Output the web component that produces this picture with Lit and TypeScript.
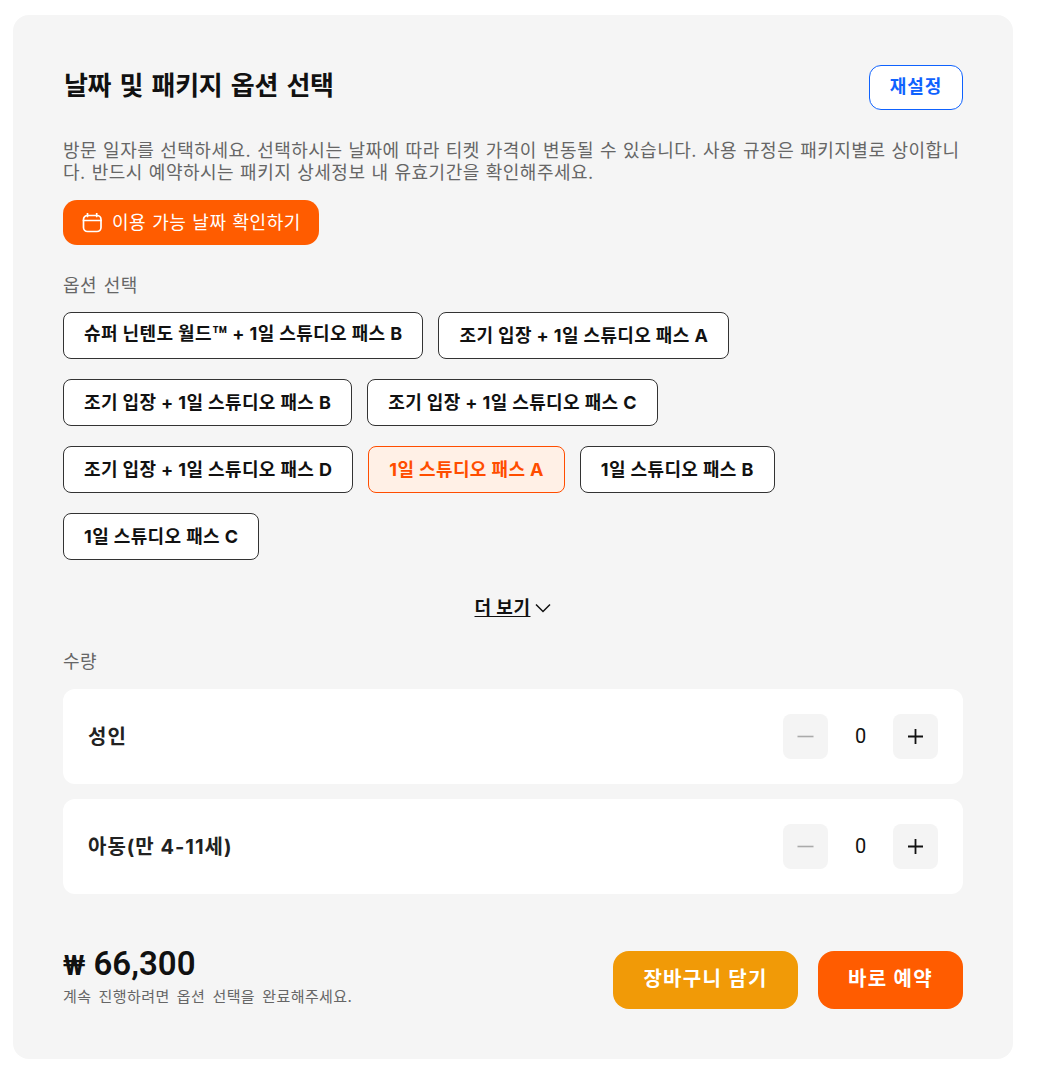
import { LitElement, css, html } from "lit";
import { customElement, property } from "lit/decorators.js";

const OPTIONS = [
  "슈퍼 닌텐도 월드™ + 1일 스튜디오 패스 B",
  "조기 입장 + 1일 스튜디오 패스 A",
  "조기 입장 + 1일 스튜디오 패스 B",
  "조기 입장 + 1일 스튜디오 패스 C",
  "조기 입장 + 1일 스튜디오 패스 D",
  "1일 스튜디오 패스 A",
  "1일 스튜디오 패스 B",
  "1일 스튜디오 패스 C",
];

@customElement("qty-row")
class QtyRow extends LitElement {
  static styles = css`
    :host {
      display: flex;
      align-items: center;
      justify-content: space-between;
      height: 95px;
      padding: 0 25px;
      box-sizing: border-box;
      background: #fff;
      border-radius: 12px;
    }
    .name {
      font-size: 20px;
      font-weight: 700;
      color: #222;
      letter-spacing: 1px;
      margin-top: -2px;
    }
    .stepper {
      display: flex;
      align-items: center;
    }
    .step {
      display: flex;
      align-items: center;
      justify-content: center;
      width: 45px;
      height: 45px;
      background: #f4f4f4;
      border-radius: 8px;
    }
    .count {
      width: 65px;
      text-align: center;
      font-family: "Roboto", sans-serif;
      font-size: 20px;
      font-weight: 400;
      color: #111;
      margin-top: -1px;
    }
  `;

  @property({ type: String })
  label = "";

  render() {
    return html`
      <div class="name">${this.label}</div>
      <div class="stepper">
        <div class="step">
          <svg width="17" height="17" viewBox="0 0 17 17"><path d="M0.5 8.5h16" stroke="#aaa" stroke-width="1.6" /></svg>
        </div>
        <div class="count">0</div>
        <div class="step">
          <svg width="17" height="17" viewBox="0 0 17 17"><path d="M1 8.5h15M8.5 1v15" stroke="#111" stroke-width="1.8" /></svg>
        </div>
      </div>
    `;
  }
}

@customElement("app-root")
class AppRoot extends LitElement {
  static styles = css`
    :host {
      display: block;
      font-family: "Inter", "Noto Sans CJK KR", sans-serif;
      background: #fff;
    }
    .card {
      width: 1000px;
      height: 1044px;
      margin: 15px 0 12px 13px;
      padding: 50px;
      box-sizing: border-box;
      background: #f5f5f5;
      border-radius: 16px;
    }
    .head {
      display: flex;
      justify-content: space-between;
      align-items: flex-start;
    }
    h2 {
      margin: 0 0 0 1px;
      font-size: 26px;
      line-height: 42px;
      font-weight: 700;
      color: #111;
      letter-spacing: -0.3px;
      word-spacing: 2.5px;
    }
    .reset {
      width: 94px;
      height: 45px;
      padding: 0 0 6px;
      box-sizing: border-box;
      font: inherit;
      font-size: 18px;
      font-weight: 700;
      letter-spacing: 1px;
      color: #0f62fe;
      background: #fff;
      border: 1px solid #0f62fe;
      border-radius: 12px;
    }
    .desc {
      margin: 30px 0 0;
      font-size: 18px;
      line-height: 22px;
      letter-spacing: 0.5px;
      word-spacing: 0.4px;
      color: #666;
      word-break: break-all;
    }
    .dates {
      display: inline-flex;
      align-items: center;
      gap: 10px;
      height: 45px;
      margin-top: 16px;
      padding: 0 18px 0 19px;
      box-sizing: border-box;
      font: inherit;
      font-size: 18px;
      letter-spacing: 0.5px;
      word-spacing: 0.5px;
      color: #fff;
      background: #ff5c00;
      border: 0;
      border-radius: 14px;
    }
    .dates span {
      margin-top: -3px;
    }
    .label {
      font-size: 18px;
      line-height: 26px;
      letter-spacing: 0.5px;
      word-spacing: 1px;
      color: #666;
    }
    .opts-label {
      margin-top: 28px;
    }
    .chips {
      display: flex;
      flex-wrap: wrap;
      gap: 20px 15px;
      margin-top: 13px;
      padding-right: 10px;
    }
    .chip {
      height: 47px;
      padding: 0 20px 4px;
      box-sizing: border-box;
      display: flex;
      align-items: center;
      font-size: 18px;
      font-weight: 700;
      letter-spacing: 0.38px;
      color: #111;
      background: #fff;
      border: 1px solid #333;
      border-radius: 8px;
      white-space: nowrap;
    }
    .chip.on {
      color: #ff4d00;
      background: #fff0e6;
      border-color: #ff4d00;
    }
    .tm {
      font-size: 24px;
      line-height: 1;
      vertical-align: -4px;
    }
    .more {
      display: flex;
      justify-content: center;
      align-items: center;
      gap: 5px;
      margin-top: 35px;
      font-size: 18px;
      line-height: 26px;
      font-weight: 700;
      letter-spacing: 0.5px;
      color: #111;
    }
    .more u {
      text-underline-offset: 2px;
    }
    .qty-label {
      margin-top: 28px;
    }
    .rows {
      display: flex;
      flex-direction: column;
      gap: 15px;
      margin-top: 14px;
    }
    .foot {
      display: flex;
      justify-content: space-between;
      align-items: flex-start;
      margin-top: 57px;
    }
    .price {
      font-family: "Roboto", "Noto Sans CJK KR", sans-serif;
      font-size: 33px;
      line-height: 38px;
      font-weight: 600;
      color: #111;
      margin-top: -6px;
    }
    .won {
      font-size: 28px;
    }
    .hint {
      margin-top: 2px;
      font-size: 15px;
      line-height: 20px;
      letter-spacing: 0.4px;
      word-spacing: 2.6px;
      color: #666;
    }
    .actions {
      display: flex;
      gap: 20px;
    }
    .buy {
      height: 58px;
      padding: 0 0 6px;
      box-sizing: border-box;
      font: inherit;
      font-size: 20px;
      font-weight: 700;
      letter-spacing: 1.3px;
      color: #fff;
      border: 0;
      border-radius: 16px;
    }
    .cart {
      width: 185px;
      background: #f19a07;
    }
    .now {
      width: 145px;
      background: #ff5c00;
    }
  `;

  private renderOption(o: string) {
    const [before, after] = o.split("™");
    return after === undefined ? o : html`<span>${before}<span class="tm">™</span>${after}</span>`;
  }

  render() {
    return html`
      <div class="card">
        <div class="head">
          <h2>날짜 및 패키지 옵션 선택</h2>
          <button class="reset">재설정</button>
        </div>
        <p class="desc">방문 일자를 선택하세요. 선택하시는 날짜에 따라 티켓 가격이 변동될 수 있습니다. 사용 규정은 패키지별로 상이합니다. 반드시 예약하시는 패키지 상세정보 내 유효기간을 확인해주세요.</p>
        <button class="dates">
          <svg width="20" height="20" viewBox="0 0 20 20" fill="none" stroke="#fff" stroke-width="1.7" stroke-linecap="round">
            <rect x="1.5" y="2.5" width="17.5" height="16" rx="4" />
            <path d="M1.5 7.5h17.5M5.5 0.5v3M14.7 0.5v3" />
          </svg>
          <span>이용 가능 날짜 확인하기</span>
        </button>
        <div class="label opts-label">옵션 선택</div>
        <div class="chips">
          ${OPTIONS.map((o) => html`<div class="chip ${o === "1일 스튜디오 패스 A" ? "on" : ""}">${this.renderOption(o)}</div>`)}
        </div>
        <div class="more">
          <u>더 보기</u>
          <svg width="16" height="10" viewBox="0 0 16 10" fill="none" stroke="#111" stroke-width="1.5"><path d="M1 1.5l7 7 7-7" /></svg>
        </div>
        <div class="label qty-label">수량</div>
        <div class="rows">
          <qty-row label="성인"></qty-row>
          <qty-row label="아동(만 4-11세)"></qty-row>
        </div>
        <div class="foot">
          <div>
            <div class="price"><span class="won">₩</span> 66,300</div>
            <div class="hint">계속 진행하려면 옵션 선택을 완료해주세요.</div>
          </div>
          <div class="actions">
            <button class="buy cart">장바구니 담기</button>
            <button class="buy now">바로 예약</button>
          </div>
        </div>
      </div>
    `;
  }
}

declare global {
  interface HTMLElementTagNameMap {
    "app-root": AppRoot;
    "qty-row": QtyRow;
  }
}
